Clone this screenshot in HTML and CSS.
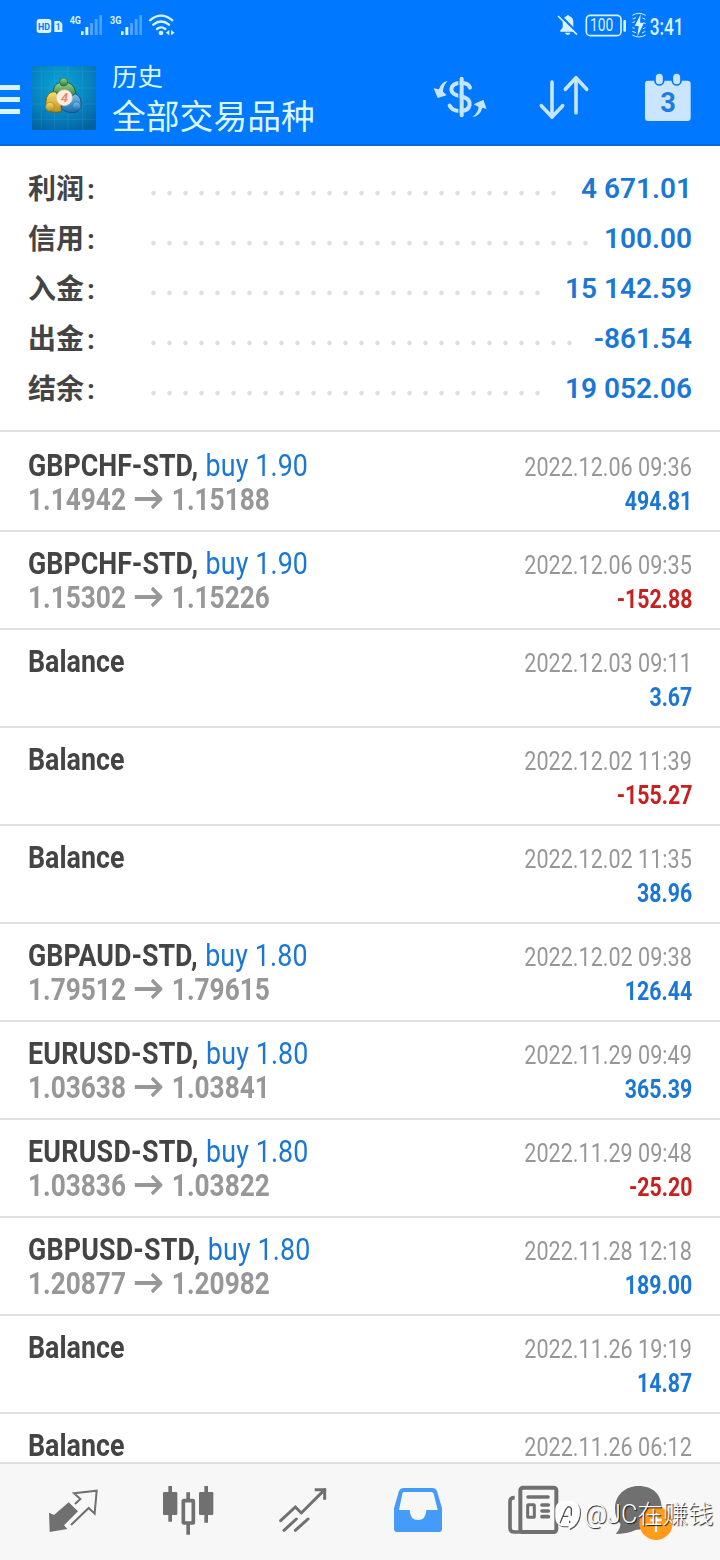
FILE: index.html
```html
<!DOCTYPE html>
<html lang="zh">
<head>
<meta charset="utf-8">
<title>历史</title>
<link rel="stylesheet" href="styles.css">
</head>
<body>
<header class="header">
  <div class="status">
    <svg width="240" height="50" viewBox="0 0 720 150" fill="#d8f3ff">
      <rect x="110" y="57" width="44" height="42" rx="8"/>
      <path d="M163 63h16l8 8v25h-24z"/>
      <g class="st-bold" fill="#0078ff"><text x="114" y="89" font-size="29" textLength="36" lengthAdjust="spacingAndGlyphs">HD</text><text x="168" y="90" font-size="27" textLength="13" lengthAdjust="spacingAndGlyphs">1</text></g>
      <g class="st-bold"><text x="209" y="71" font-size="35" textLength="34" lengthAdjust="spacingAndGlyphs">4G</text><text x="330" y="71" font-size="35" textLength="34" lengthAdjust="spacingAndGlyphs">3G</text></g>
      <g id="bars"><path d="M243 94h8v11h-8zM256 81h9v24h-9z"/><path opacity=".35" d="M270 69h9v36h-9zM284 57h9v48h-9zM298 45h8v60h-8z"/></g>
      <use href="#bars" x="120"/>
      <g fill="none" stroke="#d8f3ff" stroke-width="7" stroke-linecap="round"><path d="M450 61Q483 33 517 61M460 74Q483 55 507 74M471 87Q484 77 496 87"/></g>
      <circle cx="483" cy="99" r="7"/><path d="M508 90v16l-11-8zM513 90v16l11-8z"/>
    </svg>
    <svg width="240" height="50" viewBox="0 0 720 150" fill="#d8f3ff">
      <path d="M241 95V91L248 83V67Q250 50 260 48Q264 42 268 48Q280 52 280 67V83L286 91V95zM254 98h18q-8 14-18 0z"/>
      <path d="M236 42L294 102" stroke="#0078ff" stroke-width="8"/><path d="M234 48L291 104" stroke="#d8f3ff" stroke-width="5"/>
      <rect x="319" y="46" width="104" height="61" rx="12" fill="none" stroke="#d8f3ff" stroke-width="5"/><rect x="430" y="60" width="8" height="35" rx="3"/>
      <text class="st" x="330" y="94" font-size="54" textLength="70" lengthAdjust="spacingAndGlyphs">100</text>
      <path d="M482 43L464 78h12l-4 32 20-42h-12z"/>
      <g fill="none" stroke="#d8f3ff" stroke-width="3"><path d="M457 46Q476 34 497 46M457 105Q476 117 497 105M458 57l10-4M487 54l9 4M457 94l11 4M486 99l10-5M457 68l8-3M491 68l6 3M457 83l7 2M489 86l7-3"/></g>
      <text class="st time-text" x="509" y="104" font-size="70" textLength="102" lengthAdjust="spacingAndGlyphs">3:41</text>
    </svg>
  </div>
  <div class="toolbar">
    <svg class="menu" width="20" height="32" viewBox="0 0 20 32" fill="#d8f3ff"><path d="M0 2h20v5H0zM0 14h20v5H0zM0 26h20v5H0z"/></svg>
    <svg class="logo" width="64" height="64" viewBox="96 198 192 192">
      <defs>
        <radialGradient id="bg" cx=".45" cy=".3" r=".8"><stop offset="0" stop-color="#0aa5d8"/><stop offset=".6" stop-color="#0781bd"/><stop offset="1" stop-color="#04609f"/></radialGradient>
        <linearGradient id="gr" y2="1" x2="0"><stop stop-color="#a0d58b"/><stop offset="1" stop-color="#2c7d3d"/></linearGradient>
        <linearGradient id="ye" y2="1" x2="0"><stop stop-color="#f6df68"/><stop offset="1" stop-color="#b98d1d"/></linearGradient>
        <linearGradient id="bl" y2="1" x2="0"><stop stop-color="#7dc4ed"/><stop offset="1" stop-color="#1769ad"/></linearGradient>
      </defs>
      <rect x="96" y="198" width="192" height="192" fill="url(#bg)"/>
      <path d="M124 198v192M164 198v192M204 198v192M248 198v192M96 214h192M96 264h192M96 312h192M96 358h192" stroke="#5bc6df" opacity=".22" stroke-width="2"/>
      <path d="M160 276C160 254 174 246 192 246C214 246 228 262 227 287L208 292L180 278z" fill="url(#gr)" stroke="#275d36" stroke-width="3"/>
      <circle cx="191" cy="246" r="12" fill="url(#gr)" stroke="#275d36" stroke-width="2"/>
      <path d="M140 292Q148 272 168 276L184 310V334Q160 342 142 329Q134 318 140 292z" fill="url(#ye)" stroke="#73641a" stroke-width="3"/>
      <circle cx="150" cy="320" r="13" fill="url(#ye)" stroke="#a1801d" stroke-width="2"/>
      <path d="M184 315L225 281Q243 288 243 308Q246 330 226 337Q196 342 184 322z" fill="url(#bl)" stroke="#174e86" stroke-width="3"/>
      <circle cx="229" cy="319" r="13" fill="url(#bl)" stroke="#2268a3" stroke-width="2"/>
      <circle cx="193" cy="293" r="24" fill="#f8eee3" stroke="#d3c5ad" stroke-width="2"/>
      <text class="st-bold" x="183" y="307" font-size="38" font-style="italic" fill="#ea8a68">4</text>
    </svg>
    <div class="titles"><div class="title-small">历史</div><div class="title-big">全部交易品种</div></div>
    <div class="actions">
    <svg width="320" height="90" viewBox="0 0 960 270" fill="#c5e5ff">
      <g fill="none" stroke="#c5e5ff" stroke-linecap="round" stroke-linejoin="round">
        <path d="M210 83Q205 68 182 68Q155 69 154 89Q155 104 182 109Q210 114 209 134Q206 153 182 153Q157 154 149 137" stroke-width="12"/>
        <path d="M456 66V172M424 137L456 171L488 137M528 158V54M496 88L528 53L560 88" stroke-width="11"/>
      </g>
      <path d="M177 52V171" stroke="#0078ff" stroke-width="4"/>
      <path d="M185 56V166" stroke="#c5e5ff" stroke-width="12" stroke-linecap="round"/>
      <path d="M143 63Q125 64 117 88L101 85L113 114L140 106L129 95Q129 78 143 63zM217 171Q235 157 236 141L221 133L250 119L260 147L247 143Q240 169 217 171z"/>
      <rect x="735" y="62" width="137" height="121" rx="9" fill="#cce5ff"/>
      <g stroke="#0078ff" stroke-width="5" fill="#cce5ff"><rect x="765" y="39" width="26" height="36" rx="13"/><rect x="817" y="39" width="26" height="36" rx="13"/></g>
      <text class="st-bold" x="781" y="156" font-size="84" textLength="47" lengthAdjust="spacingAndGlyphs" fill="#1c7ce0">3</text>
    </svg>
    </div>
  </div>
</header>

<section class="summary">
  <div class="sum-row"><span class="label">利润<span class="colon">:</span></span><span class="dots"></span><span class="amount">4 671.01</span></div>
  <div class="sum-row"><span class="label">信用<span class="colon">:</span></span><span class="dots"></span><span class="amount">100.00</span></div>
  <div class="sum-row"><span class="label">入金<span class="colon">:</span></span><span class="dots"></span><span class="amount">15 142.59</span></div>
  <div class="sum-row"><span class="label">出金<span class="colon">:</span></span><span class="dots"></span><span class="amount">-861.54</span></div>
  <div class="sum-row"><span class="label">结余<span class="colon">:</span></span><span class="dots"></span><span class="amount">19 052.06</span></div>
</section>

<main class="deals" id="deals"></main>

<nav class="tabs">
  <svg width="115" height="96" viewBox="46 12 345 288" fill="#707070"><path d="M207 127L235 154L193 196L203 207L150 216L148 158L163 165z"/><path d="M226 132L242 117L223 100L291 92L285 161L267 144L214 195" fill="none" stroke="#707070" stroke-width="6"/></svg>
  <svg width="115" height="96" viewBox="391 12 345 288" fill="#707070"><path d="M506 78h11v107h-11zM614 78h11v110h-11zM560 97h11v25h-11zM560 190h11v34h-11z"/><rect x="490" y="96" width="43" height="69" rx="4"/><rect x="598" y="96" width="43" height="69" rx="4"/><rect x="551" y="122" width="30" height="67" rx="2" fill="none" stroke="#707070" stroke-width="11"/></svg>
  <svg width="115" height="96" viewBox="16 12 345 288" fill="none" stroke="#707070" stroke-width="9"><path d="M123 182L167 141L185 159L255 89M133 211L170 177M167 211L205 177" stroke-linecap="round"/><path d="M225 89H255V119"/></svg>
  <svg width="115" height="96" viewBox="361 12 345 288"><path d="M492 84H578Q588 84 592 93L607 145V206Q607 216 597 216H474Q463 216 463 206V145L478 93Q482 84 492 84z" fill="#449bfa"/><path d="M493 96H576Q580 96 582 101L594 150H560Q559 180 535 180Q511 180 510 150H478L488 101Q489 96 493 96z" fill="#f7f7f7"/></svg>
  <svg width="115" height="96" viewBox="-14 12 345 288" fill="none" stroke="#707070"><path d="M105 113Q91 113 91 125V203Q91 216 105 216H225" stroke-width="11"/><rect x="122" y="83" width="108" height="133" rx="8" stroke-width="12"/><path d="M145 111H205M187 135H206M187 153H206M187 170H206" stroke-width="11" stroke-linecap="round"/><rect x="144" y="134" width="20" height="38" rx="2" stroke-width="9"/></svg>
  <svg width="129" height="96" viewBox="331 12 387 288"><path d="M477 78C520 78 546 104 546 143C546 184 515 210 470 209Q440 222 408 222Q423 205 422 191Q406 174 406 146C406 106 436 78 477 78z" fill="#707070"/><circle cx="529" cy="190" r="50" fill="#ff9c1c"/><path d="M529 160V216M512 180H546" stroke="#fff" stroke-width="7"/></svg>
</nav>
<div class="watermark">
  <svg width="26" height="32" viewBox="0 0 78 96"><path d="M26 6H50Q75 8 75 40Q74 76 42 91L40 82H26Q2 80 1 56V30Q3 8 26 6z" fill="#fff"/><path d="M15 73L31 34Q40 16 49 28V50M24 52H40M44 65V72" fill="none" stroke="#555" stroke-width="4"/></svg>
  <span class="wm-text">@JC在赚钱</span>
</div>
<script src="app.js"></script>
</body>
</html>
```
FILE: styles.css
```css
* { box-sizing: border-box; }
body { margin: 0; width: 720px; height: 1560px; overflow: hidden; background: #fff; position: relative; font-family: Roboto, "Noto Sans CJK SC", sans-serif; }
svg { display: block; flex: none; }
.st { font-family: Roboto, sans-serif; }
.st-bold { font-family: Roboto, sans-serif; font-weight: 700; }
.time-text { font-weight: 500; }
.header { height: 146px; background: #0078ff; border-bottom: 2px solid #0a6bd8; color: #d8f7ff; }
.status { height: 50px; display: flex; justify-content: space-between; }
.toolbar { height: 94px; display: flex; align-items: flex-start; }
.menu { margin-top: 33px; }
.logo { margin: 16px 0 0 12px; }
.titles { margin: 10px 0 0 16px; width: 288px; white-space: nowrap; font-weight: 500; }
.title-small { font-size: 25.5px; line-height: 34px; font-weight: 400; }
.title-big { font-size: 33.8px; line-height: 48px; font-weight: 400; }
.actions { margin-top: 10px; }

.summary { height: 286px; padding: 17px 28px 0; border-bottom: 2px solid #e2e2e2; }
.sum-row { height: 50px; display: flex; align-items: center; }
.label { width: 117px; padding-top: 3px; font-size: 28px; line-height: 47px; font-weight: 700; color: #444; }
.colon { margin-left: 3px; }
.dots { flex: 1; height: 16px; margin: 10px 16px 0 0; background: radial-gradient(circle at 8.5px 8px, #e0e0e0 1.8px, transparent 2.8px) 0 0 / 16px 16px; }
.amount { padding-top: 2px; font-size: 28px; font-weight: 600; color: #1a77d6; line-height: 48px; }

.deals { height: 1030px; overflow: hidden; }
.deal { height: 98px; padding: 14px 28px 0; border-top: 2px solid #e2e2e2; display: flex; justify-content: space-between; white-space: nowrap; }
.deal:first-child { border-color: transparent; }
.left, .right { display: flex; flex-direction: column; }
.left { align-items: flex-start; }
.right { align-items: flex-end; padding-top: 2px; }
.symbol, .prices { font-size: 32px; line-height: 34px; transform-origin: left; }
.symbol { color: #444; font-weight: 700; transform: scaleX(.838); }
.name.eurusd-std { letter-spacing: .3px; }
.name.gbpusd-std { letter-spacing: .2px; }
.side { margin-left: 1px; font-weight: 400; color: #1a77d6; letter-spacing: .15px; }
.prices { color: #979797; font-weight: 700; transform: scaleX(.82); display: flex; align-items: center; }
.arrow { margin: 0 11px 0 11px; }
.time, .profit { font-size: 26px; line-height: 34px; transform-origin: right; }
.time { color: #979797; transform: scaleX(.83); }
.profit { font-weight: 700; color: #1a77d6; transform: scaleX(.82); }
.loss { color: #c8201f; }

.tabs { position: absolute; left: 0; bottom: 0; width: 720px; height: 98px; padding-left: 15px; display: flex; background: #f7f7f7; border-top: 2px solid #dedede; }
.watermark { position: absolute; left: 555px; top: 1499px; display: flex; align-items: center; gap: 3px; }
.watermark svg { filter: drop-shadow(1px 1px 0 #555); }
.wm-text { font-size: 25.3px; line-height: 32px; font-weight: 300; color: #fff; white-space: nowrap; text-shadow: 1px 1px 1px #111; }
```
FILE: app.js
```js
const deals = [
  ["GBPCHF-STD", "1.90", "1.14942", "1.15188", "2022.12.06 09:36", "494.81"],
  ["GBPCHF-STD", "1.90", "1.15302", "1.15226", "2022.12.06 09:35", "-152.88"],
  ["Balance", "", "", "", "2022.12.03 09:11", "3.67"],
  ["Balance", "", "", "", "2022.12.02 11:39", "-155.27"],
  ["Balance", "", "", "", "2022.12.02 11:35", "38.96"],
  ["GBPAUD-STD", "1.80", "1.79512", "1.79615", "2022.12.02 09:38", "126.44"],
  ["EURUSD-STD", "1.80", "1.03638", "1.03841", "2022.11.29 09:49", "365.39"],
  ["EURUSD-STD", "1.80", "1.03836", "1.03822", "2022.11.29 09:48", "-25.20"],
  ["GBPUSD-STD", "1.80", "1.20877", "1.20982", "2022.11.28 12:18", "189.00"],
  ["Balance", "", "", "", "2022.11.26 19:19", "14.87"],
  ["Balance", "", "", "", "2022.11.26 06:12", ""]
];
const arrow = '<svg class="arrow" width="34" height="20" viewBox="0 0 34 20" fill="none" stroke="#979797" stroke-width="3.8"><path d="M0 10H32M21 1L32 10L21 19"/></svg>';
document.getElementById("deals").innerHTML = deals.map(([name, lot, open, close, time, profit]) => `
  <div class="deal">
    <div class="left">
      <div class="symbol"><span class="name ${name.toLowerCase()}">${name}${lot ? "," : ""}</span>${lot ? ` <span class="side">buy ${lot}</span>` : ""}</div>
      ${open ? `<div class="prices">${open}${arrow}${close}</div>` : ""}
    </div>
    <div class="right">
      <div class="time">${time}</div>
      <div class="profit${profit[0] === "-" ? " loss" : ""}">${profit}</div>
    </div>
  </div>`).join("");
```
